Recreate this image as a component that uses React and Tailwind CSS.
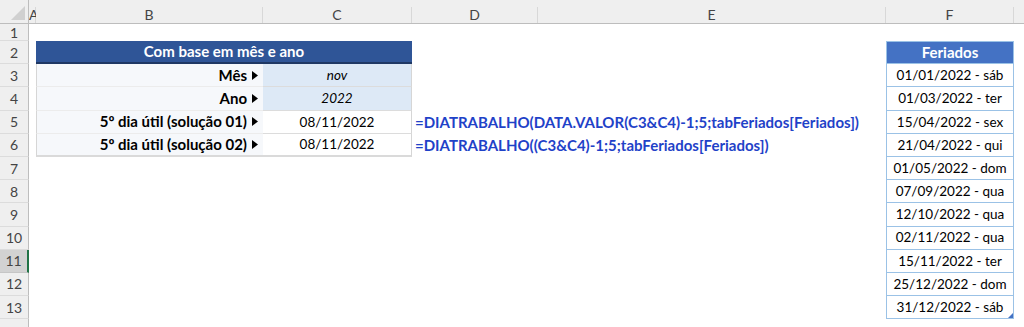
import React from 'react';

const cols = ['A', 'B', 'C', 'D', 'E', 'F'];
const colStart = ['col-start-2', 'col-start-3', 'col-start-4', 'col-start-5', 'col-start-6', 'col-start-7'];
const rowStart = [
  'row-start-2', 'row-start-3', 'row-start-4', 'row-start-5', 'row-start-6', 'row-start-7', 'row-start-8',
  'row-start-9', 'row-start-10', 'row-start-11', 'row-start-12', 'row-start-13', 'row-start-14',
];

const params = [
  { label: 'Mês', value: 'nov', fill: true },
  { label: 'Ano', value: '2022', fill: true },
  { label: '5º dia útil (solução 01)', value: '08/11/2022' },
  { label: '5º dia útil (solução 02)', value: '08/11/2022' },
];

const formulas = [
  '=DIATRABALHO(DATA.VALOR(C3&C4)-1;5;tabFeriados[Feriados])',
  '=DIATRABALHO((C3&C4)-1;5;tabFeriados[Feriados])',
];

const feriados = [
  '01/01/2022 - sáb',
  '01/03/2022 - ter',
  '15/04/2022 - sex',
  '21/04/2022 - qui',
  '01/05/2022 - dom',
  '07/09/2022 - qua',
  '12/10/2022 - qua',
  '02/11/2022 - qua',
  '15/11/2022 - ter',
  '25/12/2022 - dom',
  '31/12/2022 - sáb',
];

function Arrow() {
  return (
    <svg width="6" height="9" viewBox="0 0 6 9" className="ml-[5px] shrink-0">
      <path d="M0 0 L6 4.5 L0 9 Z" fill="#000" />
    </svg>
  );
}

export default function App() {
  return (
    <div className="w-[1024px] h-[327px] overflow-hidden bg-white font-['Lato',sans-serif] text-[13.5px] text-black grid grid-cols-[29px_7px_227px_149px_126px_348px_128px_1fr] grid-rows-[24px_17px_repeat(12,23.2px)_1fr]">
      {/* corner */}
      <div className="col-start-1 row-start-1 bg-[#efefef] border-b border-r border-[#bdbdbd] flex items-end justify-end p-[3px]">
        <svg width="14" height="14" viewBox="0 0 14 14">
          <path d="M14 0 L14 14 L0 14 Z" fill="#d0d0d0" />
        </svg>
      </div>

      {/* column letters */}
      {cols.map((c, i) => (
        <div
          key={c}
          className={`${colStart[i]} row-start-1 bg-[#efefef] border-b border-[#bdbdbd] flex items-center justify-center overflow-hidden text-[#444] text-[14px]`}
        >
          <span className="border-r border-[#d8d8d8] w-full h-[16px] mt-[6px] leading-[16px] text-center">{c}</span>
        </div>
      ))}
      <div className="col-start-8 row-start-1 bg-[#efefef] border-b border-[#bdbdbd]" />

      {/* row numbers */}
      {rowStart.map((r, i) => (
        <div
          key={r}
          className={`col-start-1 ${r} flex items-center justify-center text-[#444] text-[14px] border-b ${
            i === 10
              ? 'bg-[#d2d2d2] border-r-2 border-r-[#217346] border-b-[#c6c6c6]'
              : 'bg-[#efefef] border-r border-r-[#bdbdbd] border-b-[#dcdcdc]'
          }`}
        >
          {i + 1}
        </div>
      ))}
      <div className="col-start-1 row-start-15 bg-[#efefef] border-r border-[#bdbdbd]" />

      {/* parameters table */}
      <div className="col-start-3 col-span-2 row-start-3 bg-[#2f5597] border-b-2 border-[#1f3864] text-white font-bold text-[15px] flex items-center justify-center">
        Com base em mês e ano
      </div>
      {params.map((p, i) => (
        <React.Fragment key={p.label}>
          <div
            className={`col-start-3 ${rowStart[i + 2]} bg-[#f6f8fb] border-l border-[#d6d6d6] ${
              i === 3 ? 'border-b-2 border-b-[#dadada]' : 'border-b border-b-[#ececec]'
            } flex items-center justify-end pr-[5px] font-bold text-[15px]`}
          >
            {p.label}
            <Arrow />
          </div>
          <div
            className={`col-start-4 ${rowStart[i + 2]} border-r border-[#d6d6d6] ${
              i === 3 ? 'border-b-2 border-b-[#dadada]' : 'border-b border-b-[#dcdcdc]'
            } flex items-center justify-center ${p.fill ? 'bg-[#dde9f6] italic' : 'bg-white'}`}
          >
            {p.value}
          </div>
        </React.Fragment>
      ))}

      {/* formulas */}
      {formulas.map((f, i) => (
        <div
          key={f}
          className={`col-start-5 col-span-3 ${rowStart[i + 4]} flex items-center pl-[3px] whitespace-nowrap font-bold text-[#1f42c8] text-[15px]`}
        >
          {f}
        </div>
      ))}

      {/* tabFeriados */}
      <div className="col-start-7 row-start-3 bg-[#4472c4] border border-[#9bc2e6] text-white font-bold text-[15px] flex items-center justify-center">
        Feriados
      </div>
      {feriados.map((d, i) => (
        <div
          key={d}
          className={`col-start-7 ${rowStart[i + 2]} relative bg-white border-x border-b border-[#9bc2e6] flex items-center justify-center`}
        >
          {d}
          {i === feriados.length - 1 && (
            <svg width="5" height="5" viewBox="0 0 5 5" className="absolute right-0 bottom-0">
              <path d="M5 0 L5 5 L0 5 Z" fill="#4472c4" />
            </svg>
          )}
        </div>
      ))}
    </div>
  );
}
